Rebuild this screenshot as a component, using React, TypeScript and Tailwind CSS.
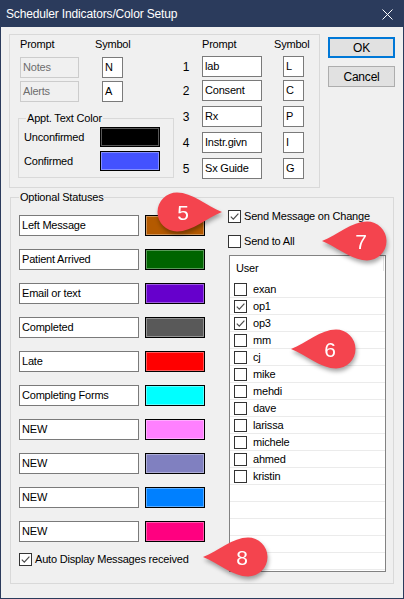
import React from 'react';

const statuses = [
    { name: 'Left Message', color: 'bg-[#b45a00]' },
    { name: 'Patient Arrived', color: 'bg-[#006400]' },
    { name: 'Email or text', color: 'bg-[#6600cc]' },
    { name: 'Completed', color: 'bg-[#595959]' },
    { name: 'Late', color: 'bg-[#ff0000]' },
    { name: 'Completing Forms', color: 'bg-[#00ffff]' },
    { name: 'NEW', color: 'bg-[#ff80ff]' },
    { name: 'NEW', color: 'bg-[#8080c0]' },
    { name: 'NEW', color: 'bg-[#0080ff]' },
    { name: 'NEW', color: 'bg-[#ff0080]' },
];

const prompts = [
    { n: '1', prompt: 'lab', symbol: 'L', mt: 'mt-[5px]' },
    { n: '2', prompt: 'Consent', symbol: 'C', mt: 'mt-[3px]' },
    { n: '3', prompt: 'Rx', symbol: 'P', mt: 'mt-[5px]' },
    { n: '4', prompt: 'Instr.givn', symbol: 'I', mt: 'mt-[5px]' },
    { n: '5', prompt: 'Sx Guide', symbol: 'G', mt: 'mt-[5px]' },
];

const users = [
    { name: 'exan', checked: false },
    { name: 'op1', checked: true },
    { name: 'op3', checked: true },
    { name: 'mm', checked: false },
    { name: 'cj', checked: false },
    { name: 'mike', checked: false },
    { name: 'mehdi', checked: false },
    { name: 'dave', checked: false },
    { name: 'larissa', checked: false },
    { name: 'michele', checked: false },
    { name: 'ahmed', checked: false },
    { name: 'kristin', checked: false },
];

const Check: React.FC<{ checked?: boolean }> = ({ checked }) => (
    <span className="flex h-[13px] w-[13px] shrink-0 items-center justify-center border border-[#333333] bg-white">
        {checked && (
            <svg width="11" height="11" viewBox="0 0 11 11">
                <path d="M1.8 5.6 L4.3 8.1 L9.4 2.6" fill="none" stroke="#4a4a4a" strokeWidth="1.2" />
            </svg>
        )}
    </span>
);

const Field: React.FC<{ value: string; className?: string }> = ({ value, className = '' }) => (
    <div className={`h-[21px] shrink-0 overflow-hidden whitespace-nowrap border border-[#7a7a7a] bg-white pl-[2px] leading-[19px] ${className}`}>
        {value}
    </div>
);

const Swatch: React.FC<{ color: string; className?: string }> = ({ color, className = '' }) => (
    <div className={`w-[60px] shrink-0 border border-black ${className}`}>
        <div className={`h-full w-full shadow-[inset_0_0_0_1px_rgba(255,255,255,0.35)] ${color}`} />
    </div>
);

// teardrop step marker, drawn pointing right then mirrored when needed
const Pin: React.FC<{ n: string; dir: 'left' | 'right'; className: string }> = ({ n, dir, className }) => (
    <svg
        width="74"
        height="50"
        viewBox="0 0 74 50"
        className={`pointer-events-none absolute drop-shadow-[1px_3px_2px_rgba(0,0,0,0.35)] ${className}`}
    >
        <path
            transform={dir === 'left' ? 'translate(74 0) scale(-1 1)' : undefined}
            d="M25 5.5 A19.5 19.5 0 0 0 25 44.5 C40 44.5 55 31 70 25 C55 19 40 5.5 25 5.5 Z"
            fill="#f4444e"
        />
        <text
            x={dir === 'left' ? 43 : 31}
            y="32.5"
            textAnchor="middle"
            fontSize="21"
            fill="#ffffff"
            fontFamily="'Liberation Sans', Arial, sans-serif"
        >
            {n}
        </text>
    </svg>
);

export default function App() {
    return (
        <div className="relative flex h-[599px] w-[404px] flex-col border border-[#2b3b5c] bg-[#f0f0f0] font-['Liberation_Sans',Arial,sans-serif] text-[11px] tracking-[-0.2px] text-black">
            {/* Title bar */}
            <div className="flex h-[26px] shrink-0 items-center justify-between bg-[#2b3b5c] pl-[5px] pr-[10px] text-[12px] tracking-[-0.15px] text-white">
                <span>Scheduler Indicators/Color Setup</span>
                <svg width="11" height="11" viewBox="0 0 11 11">
                    <path d="M0.5 0.5 L10.5 10.5 M10.5 0.5 L0.5 10.5" stroke="#ffffff" strokeWidth="1" />
                </svg>
            </div>

            {/* Top section */}
            <div className="ml-[8px] mt-[7px] flex items-start">
                <div className="flex h-[154px] w-[311px] shrink-0 border border-[#d9d9d9] pl-[10px] pt-[2px]">
                    <div className="flex w-[153px] shrink-0 flex-col">
                        <div className="flex h-[14px] items-center">
                            <span className="w-[75px]">Prompt</span>
                            <span>Symbol</span>
                        </div>
                        <div className="mt-[6px] flex">
                            <Field value="Notes" className="w-[59px] !border-[#cccccc] !bg-[#f0f0f0] text-[#6d6d6d]" />
                            <Field value="N" className="ml-[23px] w-[21px]" />
                        </div>
                        <div className="mt-[3px] flex">
                            <Field value="Alerts" className="w-[59px] !border-[#cccccc] !bg-[#f0f0f0] text-[#6d6d6d]" />
                            <Field value="A" className="ml-[23px] w-[21px]" />
                        </div>

                        {/* Appt. Text Color */}
                        <div className="relative -ml-[2px] mt-[16px] h-[60px] w-[156px] border border-[#d9d9d9] pl-[5px] pt-[8px]">
                            <span className="absolute -top-[8px] left-[7px] bg-[#f0f0f0] px-[1px] leading-[14px]">Appt. Text Color</span>
                            <div className="flex items-center">
                                <span className="w-[76px]">Unconfirmed</span>
                                <Swatch color="bg-[#000000]" className="h-[20px]" />
                            </div>
                            <div className="mt-[4px] flex items-center">
                                <span className="w-[76px]">Confirmed</span>
                                <Swatch color="bg-[#4352ff]" className="h-[20px]" />
                            </div>
                        </div>
                    </div>

                    <div className="ml-[5px] flex flex-col">
                        <div className="flex h-[14px] items-center">
                            <span className="w-[96px] pl-[24px]">Prompt</span>
                            <span>Symbol</span>
                        </div>
                        {prompts.map((p) => (
                            <div key={p.n} className={`flex items-center ${p.mt}`}>
                                <span className="w-[16px] text-center text-[12px]">{p.n}</span>
                                <Field value={p.prompt} className="ml-[8px] w-[60px]" />
                                <Field value={p.symbol} className="ml-[21px] w-[21px]" />
                            </div>
                        ))}
                    </div>
                </div>

                <div className="ml-[8px] mt-[3px] flex flex-col text-[12px]">
                    <button className="flex h-[21px] w-[67px] items-center justify-center border-2 border-[#0078d7] bg-[#e1e1e1]">OK</button>
                    <button className="mt-[8px] flex h-[21px] w-[67px] items-center justify-center border border-[#adadad] bg-[#e1e1e1]">Cancel</button>
                </div>
            </div>

            {/* Optional Statuses */}
            <div className="relative ml-[9px] mt-[9px] flex h-[387px] w-[384px] border border-[#d9d9d9]">
                <span className="absolute -top-[8px] left-[8px] bg-[#f0f0f0] px-[1px] leading-[14px]">Optional Statuses</span>

                <div className="flex flex-col pl-[8px] pt-[17px]">
                    <div className="flex flex-col gap-[13px]">
                        {statuses.map((s, i) => (
                            <div key={i} className="flex">
                                <Field value={s.name} className="w-[120px]" />
                                <Swatch color={s.color} className="ml-[6px] h-[21px]" />
                            </div>
                        ))}
                    </div>
                    <label className="mt-[11px] flex h-[13px] items-center gap-[3px]">
                        <Check checked />
                        <span>Auto Display Messages received</span>
                    </label>
                </div>

                <div className="ml-[23px] flex flex-col pt-[12px]">
                    <label className="flex h-[13px] items-center gap-[3px]">
                        <Check checked />
                        <span>Send Message on Change</span>
                    </label>
                    <label className="mt-[12px] flex h-[13px] items-center gap-[3px]">
                        <Check />
                        <span>Send to All</span>
                    </label>

                    <div className="ml-[1px] mt-[7px] h-[317px] w-[157px] overflow-hidden border border-[#828282] bg-white">
                        <div className="relative flex h-[25px] items-center pl-[6px]">
                            User
                            <span className="absolute right-[1px] top-0 h-[15px] w-px bg-[#e3e3e3]" />
                        </div>
                        {users.map((u) => (
                            <div key={u.name} className="flex h-[17px] items-center border-b border-[#ebebeb] pl-[4px]">
                                <Check checked={u.checked} />
                                <span className="ml-[6px]">{u.name}</span>
                            </div>
                        ))}
                        {[0, 1, 2, 3, 4].map((i) => (
                            <div key={i} className="h-[17px] border-b border-[#ebebeb]" />
                        ))}
                    </div>
                </div>
            </div>

            {/* step markers */}
            <Pin n="5" dir="right" className="left-[151px] top-[186px]" />
            <Pin n="7" dir="left" className="left-[317px] top-[215px]" />
            <Pin n="6" dir="left" className="left-[286px] top-[323px]" />
            <Pin n="8" dir="left" className="left-[198px] top-[531px]" />
        </div>
    );
}
